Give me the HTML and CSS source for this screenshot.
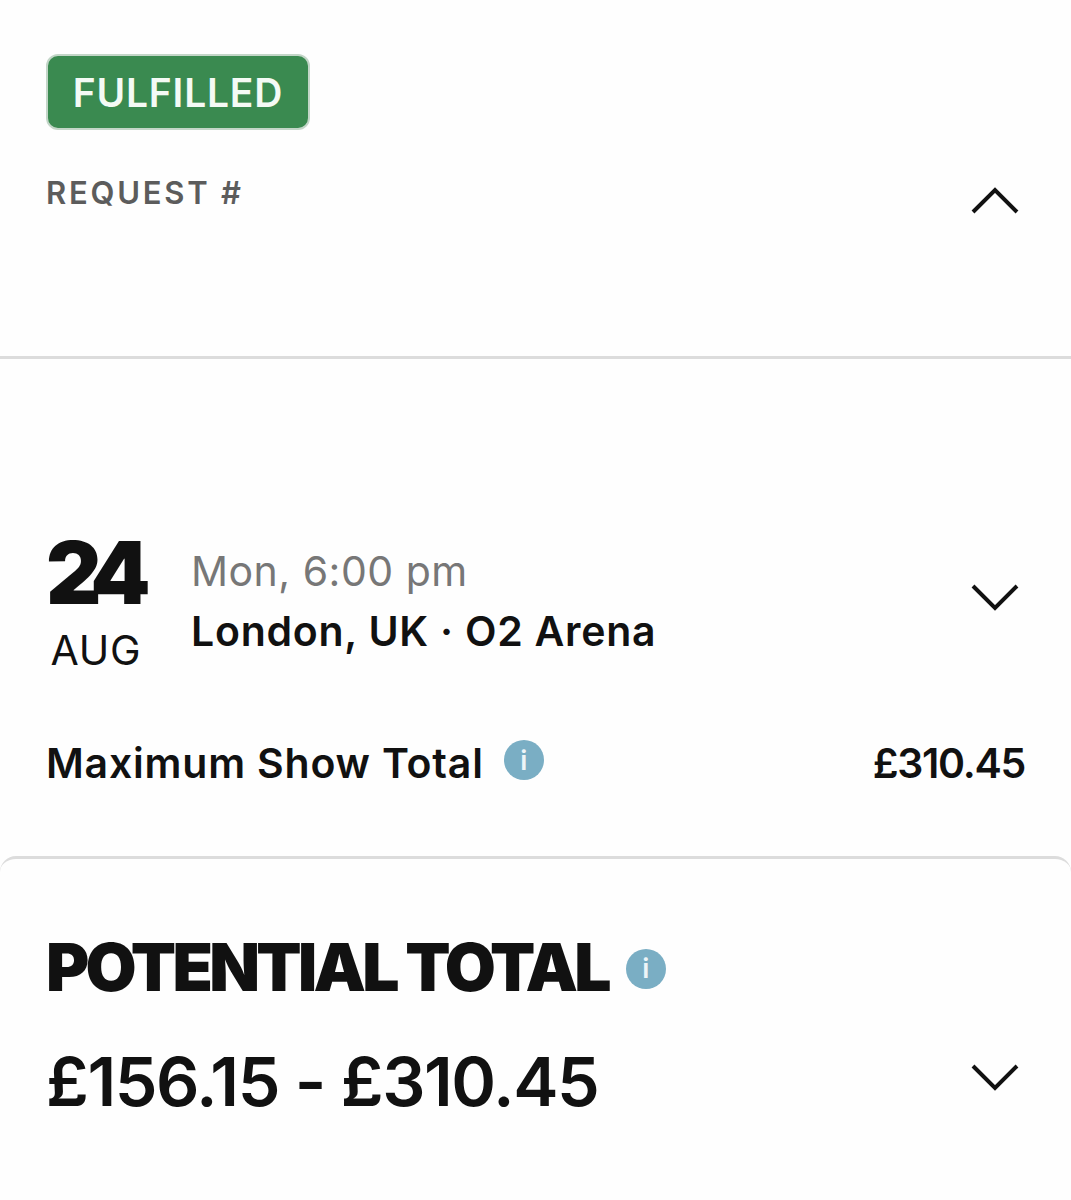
FILE: index.html
```html
<!DOCTYPE html>
<html>
<head>
<meta charset="utf-8">
<title>Request</title>
<link rel="stylesheet" href="styles.css">
</head>
<body>
<div class="request">
  <span class="badge">FULFILLED</span>
  <div class="request-row">
    <span class="request-label">REQUEST #</span>
    <svg class="chevron" width="48" height="28" viewBox="0 0 48 28"><path d="M2 25 L24 3 L46 25"/></svg>
  </div>
</div>

<div class="show">
  <div class="show-row">
    <div class="date">
      <div class="day">24</div>
      <div class="month">AUG</div>
    </div>
    <div class="info">
      <div class="time">Mon, 6:00 pm</div>
      <div class="place">London, UK · O2 Arena</div>
    </div>
    <svg class="chevron" width="48" height="28" viewBox="0 0 48 28"><path d="M2 3 L24 25 L46 3"/></svg>
  </div>
  <div class="max-row">
    <span class="max-label">Maximum Show Total</span>
    <span class="info-icon">i</span>
    <span class="max-price">£310.45</span>
  </div>
</div>

<div class="total">
  <div class="total-title">
    <span class="total-label">POTENTIAL TOTAL</span>
    <span class="info-icon">i</span>
  </div>
  <div class="total-row">
    <span class="total-price">£156.15 - £310.45</span>
    <svg class="chevron" width="48" height="28" viewBox="0 0 48 28"><path d="M2 3 L24 25 L46 3"/></svg>
  </div>
</div>
</body>
</html>
```

FILE: styles.css
```css
body{
    margin:0;
    height:1200px;
    background:#fefefe;
    color:#111;
    font-family:"Inter","Liberation Sans",sans-serif;
    overflow:hidden;
}
.chevron{
    flex:none;
    margin-left:auto;
    fill:none;
    stroke:#111;
    stroke-width:4;
}
.request{
    height:359px;
    padding:54px 52px 0 46px;
    box-sizing:border-box;
    border-bottom:3px solid #dcdcdc;
}
.badge{
    display:flex;
    align-items:center;
    justify-content:center;
    box-sizing:border-box;
    width:264px;
    height:76px;
    background:#3a8a50;
    border:2px solid #c3d6c8;
    border-radius:12px;
    color:#f4faf5;
    font-size:39px;
    font-weight:600;
    letter-spacing:.8px;
}
.request-row{
    display:flex;
    align-items:flex-start;
    margin-top:44px;
}
.request-label{
    font-size:31px;
    font-weight:600;
    letter-spacing:2.75px;
    color:#5c5c5c;
    line-height:38px;
}
.request-row .chevron{
    margin-top:13px;
}
.show{
    height:497px;
    box-sizing:border-box;
    padding:172px 52px 0 46px;
}
.show-row{
    display:flex;
    align-items:flex-start;
}
.date{
    width:100px;
    text-align:center;
}
.day{
    font-size:86px;
    font-weight:900;
    line-height:84px;
    letter-spacing:-10px;
    text-align:left;
}
.month{
    font-size:41px;
    line-height:50px;
    font-weight:400;
    margin-top:10px;
    letter-spacing:.8px;
}
.info{
    margin-left:45px;
    padding-top:10px;
}
.time{
    font-size:41px;
    line-height:60px;
    color:#777;
    letter-spacing:.5px;
}
.place{
    font-size:41px;
    line-height:60px;
    font-weight:600;
    letter-spacing:.75px;
}
.show-row .chevron{
    margin-top:52px;
}
.max-row{
    display:flex;
    align-items:center;
    margin-top:60px;
    margin-right:-6px;
}
.max-label,.max-price{
    font-size:41px;
    font-weight:600;
    line-height:56px;
}
.max-label{
    letter-spacing:.8px;
}
.max-price{
    margin-left:auto;
    letter-spacing:-1.3px;
}
.info-icon{
    display:flex;
    align-items:center;
    justify-content:center;
    width:40px;
    height:40px;
    border-radius:50%;
    background:#7aaec4;
    color:#eef5f8;
    font-size:27px;
    font-weight:600;
    margin-left:20px;
}
.max-row .info-icon{
    margin-bottom:6px;
}
.total{
    height:344px;
    box-sizing:border-box;
    padding:72px 52px 0 46px;
    border-top:3px solid #dcdcdc;
    border-radius:16px 16px 0 0;
}
.total-title{
    display:flex;
    align-items:center;
}
.total-label{
    font-size:66px;
    font-weight:900;
    line-height:72px;
    letter-spacing:-3.7px;
    margin-bottom:3px;
}
.total-title .info-icon{
    margin-left:18px;
}
.total-row{
    display:flex;
    align-items:center;
    margin-top:34px;
}
.total-price{
    font-size:68px;
    font-weight:600;
    line-height:82px;
    letter-spacing:-1.4px;
}
.total-row .chevron{
    margin-top:-8px;
}
```
